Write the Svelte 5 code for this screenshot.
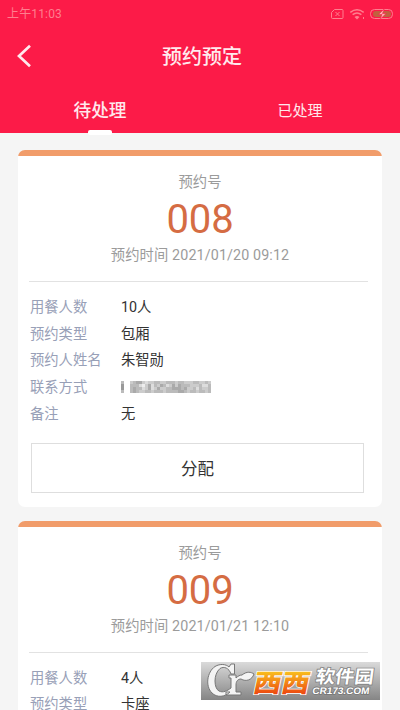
<script>
  const cards = [
    { no: '008', time: '2021/01/20 09:12', rows: [['用餐人数', '10人'], ['预约类型', '包厢'], ['预约人姓名', '朱智勋'], ['联系方式', null], ['备注', '无']] },
    { no: '009', time: '2021/01/21 12:10', rows: [['用餐人数', '4人'], ['预约类型', '卡座']] }
  ];
  // Grey levels of the pixelated phone number, one string per row, 0 = white, 9 = darkest
  const mosaic = [
    '400345532334433444344333443343',
    '600444213524354235354443334224',
    '600454423523533445554533424334',
    '400454334434443444455434434434'
  ];
  const grey = (d) => { const v = 255 - d * 17; return `rgb(${v},${v},${v})`; };
</script>

<div class="screen">
  <header>
    <div class="status">
      <span>上午11:03</span>
      <svg width="64" height="12" viewBox="0 0 64 12" fill="none" stroke="#ff7e8e" stroke-width="1">
        <path d="M3.500 1.500H11a1 1 0 0 1 1 1v7a1 1 0 0 1-1 1H1.500a1 1 0 0 1-1-1V4.500z M4.500 4l4 4M8.500 4l-4 4" />
        <path d="M19.300 4.300q6.700-5 13.400 0M21.600 6.700q4.400-3.400 8.800 0" stroke-width="1.500" />
        <path d="M23.500 8.900q2.500-2 5 0L26 11.500z" fill="#ff7e8e" stroke="none" /><path d="M32.500 9v2" />
        <rect x="39.500" y="1.500" width="22" height="9" rx="4" />
        <rect x="42" y="3" width="18" height="6" rx="3" fill="#c0613f" stroke="none" />
        <path d="M53.500 .500l-6 6h3.500L49 11.500l6-6h-3.500z" fill="#ffb0b8" stroke="#fc1b48" stroke-width=".6" />
      </svg>
    </div>
    <div class="title">
      <svg width="16" height="24" viewBox="0 0 16 24" fill="none" stroke="#ffe9ed" stroke-width="2.700"><path d="M14 1.800L3 12l11 10.200" /></svg>
      <h1>预约预定</h1>
    </div>
    <nav><div class="tab active">待处理</div><div class="tab">已处理</div></nav>
  </header>

  <main>
    {#each cards as c}
      <section class="card">
        <div class="summary">
          <div class="cap">预约号</div>
          <div class="no">{c.no}</div>
          <div class="cap time">预约时间 {c.time}</div>
        </div>
        <dl>
          {#each c.rows as [label, value]}
            <dt>{label}</dt>
            <dd>
              {#if value === null}
                <svg class="mosaic" width="90" height="12" viewBox="0 0 90 12" shape-rendering="crispEdges">
                  {#each mosaic as line, y}
                    {#each line.split('') as d, x}<rect x={x * 3} y={y * 3} width="3" height="3" fill={grey(+d)} />{/each}
                  {/each}
                </svg>
              {:else}{value}{/if}
            </dd>
          {/each}
        </dl>
        {#if c.rows.length > 2}<button>分配</button>{/if}
      </section>
    {/each}
  </main>

  <svg class="mark" width="179" height="38" viewBox="0 0 179 38">
    <defs>
      <linearGradient id="bg" x1="0" y1="0" x2="0" y2="1"><stop offset="0" stop-color="#dadada" /><stop offset="1" stop-color="#858585" /></linearGradient>
      <linearGradient id="or" gradientUnits="userSpaceOnUse" x1="0" y1="-20" x2="0" y2="2"><stop offset="0" stop-color="#f9bd1d" /><stop offset="1" stop-color="#ec4710" /></linearGradient>
    </defs>
    <rect width="179" height="38" fill="url(#bg)" />
    <path d="M30 2h3.500v10H30C28 6 23 4 19 6.500c-7 6-6 20-1 22.500 4 2 8 0 12-3V16h-2v-3h7v3c2-2 4-3 6-3 5-4 9-3 12-1-2 6-8 8-13 5-3 0-5 2-5 6v7h5v3H25v-3h4C24 35 16 36 11 31 4 24 6 10 14 4.500 19 1.500 25 2 28 5z" fill="#f4f4f4" stroke="#777" stroke-width="1" stroke-linejoin="round" />
    <g class="xi" fill="url(#or)" stroke="#fff" stroke-width="1.600" paint-order="stroke">
      <text transform="translate(51 30) skewX(-12)" textLength="56" lengthAdjust="spacingAndGlyphs">西西</text>
    </g>
    <text class="soft" transform="translate(114 21) skewX(-8)" textLength="58" lengthAdjust="spacingAndGlyphs" fill="#fff" stroke="#858585" stroke-width="1.600" paint-order="stroke">软件园</text>
    <text class="url" transform="translate(111 32) skewX(-8)" textLength="57" lengthAdjust="spacingAndGlyphs" fill="#fff" stroke="#777" stroke-width="1.500" paint-order="stroke">CR173.COM</text>
  </svg>
</div>

<style>
  :global(body) { margin: 0; }
  .screen { position: relative; width: 400px; height: 710px; overflow: hidden; background: #f5f5f5; font-family: Roboto, "Noto Sans CJK SC", sans-serif; }
  header { height: 133px; background: #fc1b48; color: #ffe9ed; }
  .status { display: flex; justify-content: space-between; align-items: center; height: 28px; padding: 0 5px 0 7px; font-size: 12px; color: #ff7e8e; }
  .status span { letter-spacing: .15px; line-height: 14px; }
  .title { display: flex; align-items: center; height: 56px; padding-left: 16px; }
  h1 { margin: 2px 0 0; flex: 1; padding-right: 28px; text-align: center; font-size: 20px; font-weight: 500; line-height: 24px; }
  nav { display: flex; height: 49px; }
  .tab { position: relative; flex: 1; text-align: center; font-size: 15px; line-height: 54px; }
  .active { font-size: 17.700px; font-weight: 500; }
  .active::after { content: ""; position: absolute; left: 88px; top: 46px; width: 24px; height: 5px; border-radius: 2px; background: #fff; }
  main { display: flex; flex-direction: column; gap: 13.500px; padding: 17px 18px 0; }
  .card { box-sizing: border-box; flex: none; height: 357px; overflow: hidden; border-radius: 7px; background: linear-gradient(#f19c6a 6px, #fff 6px); padding: 6px 13px 0 12px; }
  .summary { display: flex; flex-direction: column; align-items: center; height: 126px; padding: 15px 0 0 3px; box-sizing: border-box; margin: 0 1px 0 -1px; border-bottom: 1px solid #e2e2e2; }
  .cap { font-size: 14.300px; line-height: 22px; color: #9b9b9b; }
  .no { font-size: 40px; line-height: 50px; color: #d56c43; margin-top: 2px; letter-spacing: -.2px; }
  .time { letter-spacing: .12px; line-height: 20px; }
  dl { display: grid; grid-template-columns: 91px 1fr; grid-auto-rows: 26.600px; align-items: center; margin: 12px 0 0; font-size: 14.300px; line-height: 22px; }
  dt { color: #98a0b7; }
  dd { margin: 0; color: #333; }
  .mosaic { display: block; }
  button { display: block; width: 333px; height: 50px; margin: 16px 0 0 1px; padding: 0; border: 1px solid #dedede; background: #fff; color: #333; font: inherit; font-size: 16.500px; }
  .mark { position: absolute; left: 201px; top: 662px; }
  .xi { font: 900 25px "Noto Sans CJK SC", sans-serif; }
  .soft { font: 700 18px "Noto Sans CJK SC", sans-serif; }
  .url { font: 700 9.500px "Liberation Sans", sans-serif; }
</style>
